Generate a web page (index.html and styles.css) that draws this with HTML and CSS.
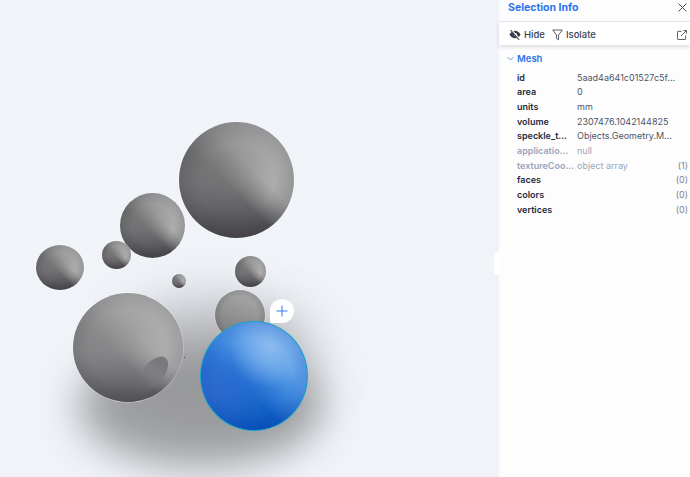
FILE: index.html
```html
<!DOCTYPE html>
<html lang="en">
<head>
    <meta charset="UTF-8">
    <title>Selection Info</title>
    <link rel="stylesheet" href="styles.css">
</head>
<body>
    <div class="app">
        <div class="viewer">
            <div class="shadow shadow-main"></div>
            <div class="shadow shadow-left"></div>
            <div class="shadow shadow-right"></div>
            <div class="ball ball-big"></div>
            <div class="ball ball-mid"></div>
            <div class="ball ball-left"></div>
            <div class="ball ball-small"></div>
            <div class="ball ball-tiny"></div>
            <div class="ball ball-right"></div>
            <div class="ball ball-back"></div>
            <div class="ball ball-large"><div class="dent"></div></div>
            <div class="ball ball-blue"></div>
            <div class="dot"></div>
            <button class="add">
                <svg width="12" height="12" viewBox="0 0 12 12"><path d="M6 .5v11M.5 6h11" stroke="#3b7bea" stroke-width="1" fill="none"/></svg>
            </button>
        </div>
        <div class="panel">
            <div class="handle"></div>
            <div class="panel-head">
                <span class="panel-title">Selection Info</span>
                <svg class="close" width="9" height="9" viewBox="0 0 9 9"><path d="M.5.5l8 8M8.500.5l-8 8" stroke="#444b5a" stroke-width="1" fill="none"/></svg>
            </div>
            <div class="tools">
                <span class="tool">
                    <svg width="12" height="11" viewBox="0 0 12 11"><path d="M.5 5.500C2 3 3.800 1.800 6 1.800s4 1.200 5.500 3.700C10 8 8.200 9.200 6 9.200S2 8 .5 5.500z" fill="#333a48"/><circle cx="6.500" cy="5.500" r="1.500" fill="#fff"/><path d="M2 .6l8.500 9.800" stroke="#fff" stroke-width="1.800"/><path d="M1.600 1l8.500 9.800" stroke="#333a48" stroke-width="1.100"/></svg>
                    Hide
                </span>
                <span class="tool">
                    <svg width="11" height="12" viewBox="0 0 11 12"><path d="M.7 1h9.600L6.500 6v4.800L4.500 9.600V6z" stroke="#333a48" stroke-width=".8" fill="none" stroke-linejoin="round"/></svg>
                    Isolate
                </span>
                <svg class="open" width="10" height="10" viewBox="0 0 11 11"><path d="M5 1.500H1.200a.7.700 0 0 0-.7.700v7.600c0 .4.300.7.700.7h7.600a.7.700 0 0 0 .7-.7V6M4.500 6.500L10.300.7M7 .6h3.400V4" stroke="#333a48" stroke-width=".9" fill="none"/></svg>
            </div>
            <div class="section">
                <div class="section-head">
                    <svg width="7" height="5" viewBox="0 0 7 5"><path d="M.5 1l3 3 3-3" stroke="#5f93ea" stroke-width=".9" fill="none"/></svg>
                    <span>Mesh</span>
                </div>
                <div class="row"><span class="key">id</span><span class="val">5aad4a641c01527c5f...</span></div>
                <div class="row"><span class="key">area</span><span class="val">0</span></div>
                <div class="row"><span class="key">units</span><span class="val">mm</span></div>
                <div class="row"><span class="key">volume</span><span class="val">2307476.1042144825</span></div>
                <div class="row"><span class="key">speckle_t...</span><span class="val">Objects.Geometry.M...</span></div>
                <div class="row muted"><span class="key">applicatio...</span><span class="val">null</span></div>
                <div class="row muted"><span class="key">textureCoo...</span><span class="val">object array</span><span class="count">(1)</span></div>
                <div class="row"><span class="key">faces</span><span class="val"></span><span class="count">(0)</span></div>
                <div class="row"><span class="key">colors</span><span class="val"></span><span class="count">(0)</span></div>
                <div class="row"><span class="key">vertices</span><span class="val"></span><span class="count">(0)</span></div>
            </div>
        </div>
    </div>
</body>
</html>
```

FILE: styles.css
```css
*{
    margin: 0px;
    padding: 0px;
    box-sizing: border-box;
}
html, body{
    height: 100%;
    overflow: hidden;
}
body{
    font-family: Inter, "Liberation Sans", sans-serif;
    background: #eff3f9;
    color: #2b3345;
}
.app{
    display: flex;
    height: 477px;
}
.viewer{
    position: relative;
    flex: 1;
    overflow: hidden;
    background: #f0f4f9;
}

/* contact shadow on the ground */
.shadow{
    position: absolute;
    border-radius: 50%;
    background: #8f9092;
}
.shadow-main{
    left: 78px;
    top: 345px;
    width: 244px;
    height: 122px;
    filter: blur(20px);
    opacity: .85;
}
.shadow-left{
    left: 120px;
    top: 296px;
    width: 175px;
    height: 110px;
    filter: blur(24px);
    opacity: .5;
}
.shadow-right{
    left: 230px;
    top: 310px;
    width: 90px;
    height: 110px;
    filter: blur(24px);
    opacity: .3;
}

/* spheres */
.ball{
    position: absolute;
    border-radius: 50%;
    overflow: hidden;
    background:
        radial-gradient(circle at 50% 50%, rgba(50,50,54,0) 46%, rgba(50,50,54,.2) 71%),
        radial-gradient(ellipse at 2% 32%, rgba(104,104,106,.75), rgba(104,104,106,0) 62%),
        linear-gradient(225deg, #b4b3b4 0%, rgba(174,174,175,.95) 38%, rgba(150,150,150,0) 56%),
        linear-gradient(178deg, #a0a0a0 0%, #79787a 52%, #464448 100%);
    box-shadow: 0 0 0 .6px rgba(255,255,255,.4);
}
.ball-big{
    left: 179px;
    top: 122px;
    width: 115px;
    height: 116px;
}
.ball-mid{
    left: 120px;
    top: 193px;
    width: 65px;
    height: 65px;
}
.ball-left{
    left: 36px;
    top: 245px;
    width: 48px;
    height: 45px;
}
.ball-small{
    left: 102px;
    top: 241px;
    width: 29px;
    height: 28px;
}
.ball-tiny{
    left: 172px;
    top: 274px;
    width: 14px;
    height: 14px;
}
.ball-right{
    left: 235px;
    top: 256px;
    width: 31px;
    height: 31px;
}
.ball-back{
    left: 215px;
    top: 290px;
    width: 50px;
    height: 50px;
    background:
        radial-gradient(circle at 50% 50%, rgba(50,50,54,0) 50%, rgba(50,50,54,.18) 71%),
        linear-gradient(200deg, #b0afb0, #8e8d8e 60%, #777678);
}
.ball-large{
    left: 73px;
    top: 293px;
    width: 110px;
    height: 109px;
    background:
        radial-gradient(circle at 50% 50%, rgba(50,50,54,0) 50%, rgba(50,50,54,.14) 71%),
        radial-gradient(ellipse at 2% 35%, rgba(120,120,122,.55), rgba(120,120,122,0) 60%),
        linear-gradient(225deg, #b2b1b2 0%, rgba(174,173,174,.95) 38%, rgba(150,150,150,0) 58%),
        linear-gradient(178deg, #adacad 0%, #8c8b8d 52%, #545256 100%);
}
.dent{
    position: absolute;
    left: 68px;
    top: 60px;
    width: 22px;
    height: 44px;
    border-radius: 50%;
    background: linear-gradient(180deg, #7a787c 20%, rgba(122,120,124,0) 95%);
    transform: rotate(38deg);
}
.ball-blue{
    left: 200px;
    top: 321px;
    width: 108px;
    height: 110px;
    border: 1.5px solid #19a6c9;
    box-shadow: none;
    background:
        radial-gradient(circle at 50% 50%, rgba(10,60,170,0) 50%, rgba(10,60,170,.16) 71%),
        radial-gradient(circle at 66% 22%, #8abaf0 0%, rgba(130,180,238,0) 38%),
        radial-gradient(ellipse at 4% 62%, rgba(52,106,205,.85), rgba(52,106,205,0) 52%),
        linear-gradient(225deg, #66a8ea 0%, rgba(95,160,232,.95) 30%, rgba(95,160,232,0) 60%),
        linear-gradient(178deg, #4a90e4 0%, #1a70d4 55%, #0752b8 100%);
}
.dot{
    position: absolute;
    left: 184px;
    top: 357px;
    width: 1px;
    height: 1px;
    background: #2b4f80;
}
.add{
    position: absolute;
    left: 270px;
    top: 299px;
    width: 24px;
    height: 24px;
    display: flex;
    align-items: center;
    justify-content: center;
    border: none;
    border-radius: 50% 50% 50% 2px;
    background: #fff;
}

/* right panel */
.panel{
    position: relative;
    width: 191px;
    background: #fdfdfe;
}
.handle{
    position: absolute;
    left: -5px;
    top: 252px;
    width: 5px;
    height: 23px;
    background: #fff;
    border-radius: 3px 0px 0px 3px;
}
.panel-head{
    display: flex;
    align-items: center;
    justify-content: space-between;
    height: 22px;
    padding: 0px 3px 7px 9px;
    border-bottom: 1px solid #e6e9f0;
}
.panel-title{
    font-size: 10.5px;
    font-weight: 700;
    color: #2a73ea;
}
.tools{
    display: flex;
    align-items: center;
    height: 23px;
    padding: 2px 3px 0px 10px;
    background: #fff;
    box-shadow: 0px 2px 4px rgba(40,50,70,.16);
    font-size: 9.5px;
    font-weight: 500;
    color: #3a4152;
}
.tool{
    display: flex;
    align-items: center;
    gap: 3px;
    margin-right: 7px;
}
.open{
    margin-left: auto;
}
.section{
    padding: 7px 2px 0px 8px;
}
.section-head{
    display: flex;
    align-items: center;
    gap: 3px;
    height: 13px;
    margin-bottom: 5px;
    font-size: 9.5px;
    font-weight: 600;
    color: #2a73ea;
}
.row{
    display: flex;
    align-items: center;
    height: 14.67px;
    padding-left: 10px;
    font-size: 9px;
}
.key{
    width: 60px;
    flex-shrink: 0;
    font-weight: 600;
    color: #252c3d;
    white-space: nowrap;
}
.val{
    color: #4d5566;
    white-space: nowrap;
}
.count{
    margin-left: auto;
    color: #7b8291;
}
.muted .key, .muted .val{
    color: #9aa5bb;
}
```
